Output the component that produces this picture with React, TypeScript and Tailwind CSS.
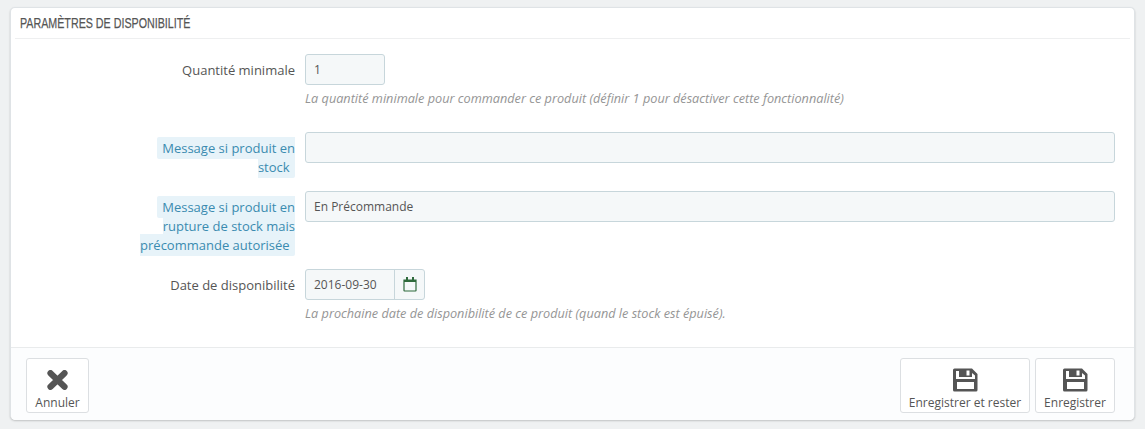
function CalendarIcon() {
	return (
		<svg width="14" height="15" viewBox="0 0 14 15" className="text-[#2f6a3c]">
			<path
				d="M1 3h12v10.5a.5.5 0 0 1-.5.5h-11a.5.5 0 0 1-.5-.5z"
				fill="none"
				stroke="currentColor"
				strokeWidth="1.2"
			/>
			<rect x="1" y="3" width="12" height="2" fill="currentColor" />
			<rect x="3" y="0" width="2" height="4" fill="currentColor" />
			<rect x="9" y="0" width="2" height="4" fill="currentColor" />
		</svg>
	);
}

function SaveIcon() {
	return (
		<svg width="25" height="24" viewBox="0 0 25 24" className="text-[#555]">
			<path
				fillRule="evenodd"
				fill="currentColor"
				d="M1.5 0.5H19L24.5 6V22a1.5 1.5 0 0 1-1.5 1.5H1.5A1.5 1.5 0 0 1 0 22V2A1.5 1.5 0 0 1 1.5 0.5ZM3 3V11H22V7.5L19 5V9H6V3ZM4 14V21H21V14ZM13.5 2.5V7.5H16.5V2.5Z"
			/>
		</svg>
	);
}

function CloseIcon() {
	return (
		<svg width="21" height="20" viewBox="0 0 21 20" className="text-[#555]">
			<path
				d="M3.5 3.2 17.5 16.8M17.5 3.2 3.5 16.8"
				stroke="currentColor"
				strokeWidth="6.2"
				strokeLinecap="round"
				fill="none"
			/>
		</svg>
	);
}

function Hint({ text }: { text: string }) {
	return (
		<span className="bg-[#e7f3f9] text-[#3a8bb0] py-[2px] pl-[5px] pr-[2px] rounded-[2px]">
			{text}
		</span>
	);
}

function FooterButton({
	label,
	icon,
	width,
}: {
	label: string;
	icon: React.ReactNode;
	width: string;
}) {
	return (
		<button
			type="button"
			className={`${width} h-[55px] bg-white border border-[#dcdfe2] rounded-[3px] flex flex-col items-center text-[12px] leading-[17px] text-[#555] pt-[6px]`}
		>
			<span className="h-[29px] flex items-center justify-center">{icon}</span>
			<span>{label}</span>
		</button>
	);
}

export default function App() {
	return (
		<div
			className="w-[1145px] h-[429px] bg-[#eff1f2] pt-[7px] pl-[10px] overflow-hidden text-[12px] text-[#555]"
			style={{ fontFamily: '"Open Sans", sans-serif' }}
		>
			<div className="w-[1125px] h-[413px] bg-white border border-[#dfe3e6] border-b-0 rounded-[5px] shadow-[0_1px_2px_rgba(0,0,0,0.2)] flex flex-col overflow-hidden">
				<div className="mx-[4px] h-[31px] border-b border-[#eeeff0] pl-[5px] flex items-center">
					<span
						className="text-[15.5px] text-[#555] uppercase origin-left scale-x-[0.69] whitespace-nowrap [-webkit-text-stroke:0.25px_#555]"
						style={{ fontFamily: '"Liberation Sans", sans-serif' }}
					>
						Paramètres de disponibilité
					</span>
				</div>

				<div className="flex-1 flex flex-col pt-[15px] pr-[19px]">
					<div className="flex gap-[10px] h-[78px]">
						<div className="w-[284px] h-[31px] pt-[2px] flex items-center justify-end text-[13px]">
							Quantité minimale
						</div>
						<div>
							<div className="w-[80px] h-[31px] bg-[#f5f8f9] border border-[#c7d6db] rounded-[3px] pl-[8px] flex items-center">
								1
							</div>
							<p className="mt-[5px] text-[12.7px] leading-[16px] italic text-[#959595]">
								La quantité minimale pour commander ce produit (définir 1 pour
								désactiver cette fonctionnalité)
							</p>
						</div>
					</div>

					<div className="flex gap-[10px] h-[59px]">
						<div className="w-[284px] pl-[130px] pt-[7px] text-right text-[13px] leading-[19px]">
							<Hint text={"Message si produit en stock\u00a0"} />
						</div>
						<div className="flex-1 h-[31px] bg-[#f5f8f9] border border-[#c7d6db] rounded-[3px]" />
					</div>

					<div className="flex gap-[10px] h-[78px]">
						<div className="w-[284px] pl-[120px] pt-[7px] text-right text-[13px] leading-[19px]">
							<Hint text={"Message si produit en rupture de stock mais précommande autorisée\u00a0"} />
						</div>
						<div className="flex-1 h-[31px] bg-[#f5f8f9] border border-[#c7d6db] rounded-[3px] pl-[8px] flex items-center">
							En Précommande
						</div>
					</div>

					<div className="flex gap-[10px]">
						<div className="w-[284px] h-[31px] pt-[2px] flex items-center justify-end text-[13px]">
							Date de disponibilité
						</div>
						<div>
							<div className="w-[120px] h-[31px] bg-[#f5f8f9] border border-[#c7d6db] rounded-[3px] flex">
								<div className="flex-1 pl-[8px] flex items-center">
									2016-09-30
								</div>
								<div className="w-[30px] border-l border-[#c7d6db] flex items-center justify-center">
									<CalendarIcon />
								</div>
							</div>
							<p className="mt-[5px] text-[12.7px] leading-[16px] italic text-[#959595]">
								La prochaine date de disponibilité de ce produit (quand le stock
								est épuisé).
							</p>
						</div>
					</div>
				</div>

				<div className="h-[73px] bg-[#fcfdfe] border-t border-[#e9ebec] pt-[10px] pl-[15px] pr-[19px] flex items-start gap-[5px]">
					<FooterButton label="Annuler" width="w-[63px]" icon={<CloseIcon />} />
					<div className="flex-1" />
					<FooterButton
						label="Enregistrer et rester"
						width="w-[130px]"
						icon={<SaveIcon />}
					/>
					<FooterButton label="Enregistrer" width="w-[80px]" icon={<SaveIcon />} />
				</div>
			</div>
		</div>
	);
}
